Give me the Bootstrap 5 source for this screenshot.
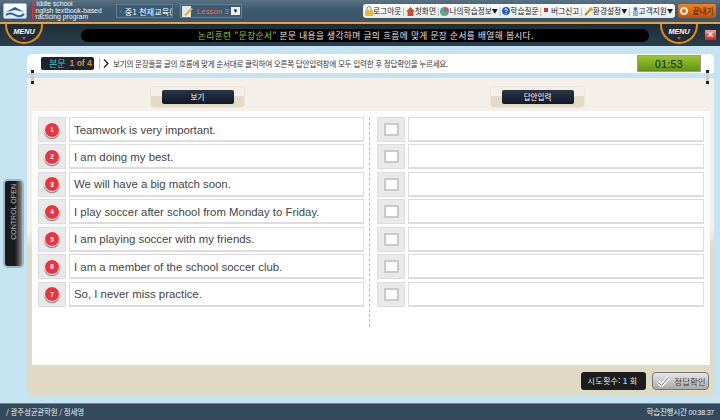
<!DOCTYPE html>
<html lang="ko">
<head>
  <meta charset="UTF-8">
  <meta name="viewport" content="width=device-width, initial-scale=1.0">
  <title>문장순서</title>
  <link href="https://cdn.jsdelivr.net/npm/bootstrap@5.3.3/dist/css/bootstrap.min.css" rel="stylesheet">
  <style>
    html, body { height: 100%; }
    body { width: 720px; height: 420px; overflow: hidden; background: #c5e3f1; font-family: "Noto Sans CJK KR", "Noto Sans", sans-serif; font-size: 9px; line-height: 1; position: relative; }
    .top-bar { height: 22px; background: linear-gradient(#587184, #3f5b70 40%, #3c566b); padding: 0 4px 0 3px; }
    .logo-box { width: 24px; height: 16px; flex-shrink: 0; background: linear-gradient(#fff, #dfe8f2); border: 1px solid #9fb4c6; border-radius: 2px; }
    .logo-text { width: 85px; flex-shrink: 0; margin-left: 4px; color: #f0f4f7; font: 6.8px/6.9px "Liberation Sans", sans-serif; white-space: nowrap; }
    .logo-text b { color: #d8392e; font-weight: 700; }
    .pick-box { height: 14px; flex-shrink: 0; background: #3a5b75; border: 1px solid #64808f; color: #fff; overflow: hidden; white-space: nowrap; }
    .pick-one { width: 57px; padding-left: 3px; font-size: 8.2px; }
    .pick-two { width: 62px; margin-left: 7px; padding-left: 1px; color: #f07040; font: 7.6px "Liberation Sans", sans-serif; letter-spacing: .1px; }
    .drop-mark { width: 9px; height: 8px; background: #eee; color: #111; font-size: 6px; line-height: 8px; text-align: center; margin-left: auto; margin-right: 1px; }
    .tool-menu { width: 312px; height: 14px; flex-shrink: 0; margin-left: auto; background: linear-gradient(#fff, #e9edf0); border-radius: 3px; color: #222; font-size: 7.7px; padding: 0 2px; white-space: nowrap; }
    .tool-menu i { font-style: normal; color: #777; }
    .tool-menu small { font-size: 6px; color: #111; }
    .exit-btn { width: 38px; height: 14px; flex-shrink: 0; margin-left: 3px; background: linear-gradient(#f08120, #c84f08); border-radius: 2px; color: #3a1500; font-size: 7.7px; }
    .orange-line { height: 2px; background: #e9a23f; }
    .sub-bar { height: 22px; background: linear-gradient(#1c2e3a, #2a3f4b); padding: 5px 0 0 81px; }
    .msg-pill { width: 568px; height: 13px; background: #000; border-radius: 7px; color: #e4e4e4; font-size: 8.7px; letter-spacing: .38px; padding-left: 117px; line-height: 13px; white-space: nowrap; }
    .msg-pill em { font-style: normal; color: #9fc52a; }
    .round-menu { position: absolute; top: 24px; width: 38px; height: 20px; border: 2px solid #e08a1a; border-top: 0; border-radius: 0 0 19px 19px; background: #222c33; color: #fff; font: italic 700 7.2px "Liberation Sans", sans-serif; text-align: center; padding-top: 3px; }
    .round-menu::after { content: ""; display: block; width: 0; margin: 1px auto 0; border: 2px solid transparent; border-top: 3px solid #e33; }
    .close-x { position: absolute; left: 705px; top: 30px; width: 11px; height: 10px; background: linear-gradient(#f29a8e, #d3231c); color: #fff; font: 700 10px/10px "Liberation Sans", sans-serif; text-align: center; }
    .work-wrap { margin: 8px 6px 0 27px; }
    .head-strip { height: 20px; background: #fff; border-radius: 5px 5px 3px 3px; border-bottom: 1px solid #ddd; padding-left: 14px; color: #333; font-size: 7.6px; letter-spacing: -.27px; white-space: nowrap; }
    .count-pill { width: 53px; height: 13px; background: #1b2430; border-radius: 2px; color: #4fc4b8; font-size: 9px; letter-spacing: 0; padding-left: 8px; }
    .count-pill span { color: #d9922c; margin-left: 4px; font-family: "Liberation Sans", sans-serif; font-size: 8.5px; font-weight: 700; }
    .head-sep { width: 1px; height: 11px; margin: 0 3px 0 5px; background: #bbb; }
    .time-box { width: 64px; height: 17px; margin: 0 13px 0 auto; background: linear-gradient(#97c72e, #62931a); border: 1px solid #999; color: #10240a; font: 10.5px "Liberation Sans", sans-serif; letter-spacing: .3px; }
    .ring-mark { position: absolute; width: 3px; height: 14px; top: 70px; border-top: 3px solid #222; border-bottom: 3px solid #222; background: #ccc; }
    .main-panel { height: 317px; margin-top: 4px; padding-top: 8px; background: linear-gradient(#f4f0e9 0, #f4f0e9 150px, #e0dac5 170px); }
    .tab-head { width: 95px; height: 22px; padding-top: 3px; border-radius: 4px; background: linear-gradient(#f4f0e9 45%, #e2dcc6 45%); border: 1px solid #ece7da; }
    .tab-left { margin-left: 123px; }
    .tab-right { margin-left: 245px; }
    .tab-label { width: 72px; height: 14px; margin: 0 auto; background: linear-gradient(#2a3448, #11182a); border-radius: 2px; color: #fff; font-size: 7.5px; }
    .white-area { height: 254px; margin: 3px 4px 0 5px; padding: 6px; background: #fff; }
    .sort-col { width: 326px; }
    .answer-col { width: 327px; margin-left: 7px; }
    .split-line { width: 1px; height: 210px; margin-left: 5px; border-left: 1px dashed #bbb; }
    .line-row { height: 25px; margin-bottom: 2.45px; }
    .num-cell { width: 28px; background: #e9e9e9; border: 1px solid #ddd; }
    .txt-cell { flex: 1; margin-left: 3px; border: 1px solid #ddd; border-bottom-width: 2px; background: #fff; color: #444; font: 11.4px "Liberation Sans", sans-serif; padding: 1px 0 0 4px; }
    .num-dot { width: 16px; height: 16px; border-radius: 50%; background: #f0323f; border: 1px solid #fff; box-shadow: 0 1px 1px #777; color: #fff; font: 700 6.5px "Liberation Sans", sans-serif; }
    .check-slot { width: 15px; height: 13px; background: #fff; border: 2px solid #c9c9c9; }
    .action-bar { height: 30px; padding: 7px 5px 0 0; }
    .try-box { width: 65px; height: 18px; background: #1c1c1c; border-radius: 3px; color: #e8e8e8; font-size: 8px; letter-spacing: .3px; padding-right: 2px; }
    .try-box b { color: #6fd6e2; margin: 0 2px; }
    .check-btn { width: 57px; height: 18px; margin-left: 6px; background: linear-gradient(#e6e6e6, #a9a9a9); border: 1px solid #777; border-radius: 4px; color: #444; font-size: 8.5px; padding-left: 1px; }
    .ctrl-tab { position: absolute; left: 3px; top: 179px; width: 21px; height: 89px; border-radius: 5px; background: linear-gradient(90deg, #1a1a1a 60%, #8a8a8a); border: 2px solid #9db7c4; color: #bbb; font: 7px "Liberation Sans", sans-serif; }
    .ctrl-tab span { writing-mode: vertical-rl; transform: rotate(180deg); margin-top: -24px; white-space: nowrap; }
    .foot-bar { position: absolute; left: 0; right: 0; bottom: 0; height: 17px; padding: 0 6px; background: #34495c; border-top: 1px solid #6a8ba0; color: #e8edf1; font-size: 7.5px; letter-spacing: -.22px; }
    .foot-clock { font-family: "Liberation Sans", sans-serif; font-size: 7px; }
  </style>
</head>
<body>

  <div class="top-bar d-flex align-items-center">
    <div class="logo-box d-flex align-items-center justify-content-center">
      <svg width="20" height="13" viewBox="0 0 20 13"><path d="M1 7 10 2l9 5-9-2z" fill="#1d5fae"/><path d="M1 10q4-3 9 0t9-1" fill="none" stroke="#1d5fae" stroke-width="2"/></svg>
    </div>
    <div class="logo-text"><b>M</b>iddle school<br><b>E</b>nglish textbook-based<br><b>P</b>racticing program</div>
    <div class="pick-box pick-one d-flex align-items-center gap-1">
      <svg width="7" height="11" viewBox="0 0 7 11"><rect width="7" height="11" rx="1" fill="#6fa4d6"/><path d="M1 3h5M1 5h5M1 7h5" stroke="#dff"/></svg>
      <span>중1 천재교육(</span>
    </div>
    <div class="pick-box pick-two d-flex align-items-center">
      <svg width="11" height="11" viewBox="0 0 11 11"><rect width="9" height="11" fill="#dfe8f2"/><path d="M2 9 9 2l2 1-7 7z" fill="#e8b020"/></svg>
      <span class="ms-1">Lesson 3</span>
      <span class="drop-mark">▼</span>
    </div>
    <div class="tool-menu d-flex align-items-center justify-content-between">
      <span class="d-flex align-items-center"><svg width="8" height="10" viewBox="0 0 8 10"><path d="M2 4V2.500a2 2 0 0 1 4 0V4" fill="none" stroke="#888"/><rect y="4" width="8" height="6" rx="1" fill="#e9b93a"/></svg>로그아웃</span><i>|</i>
      <span class="d-flex align-items-center"><svg width="9" height="9" viewBox="0 0 9 9"><path d="M4.500 0 9 4.500H7.500V9h-6V4.500H0z" fill="#c8502c"/></svg>첫화면</span><i>|</i>
      <span class="d-flex align-items-center"><svg width="9" height="9" viewBox="0 0 9 9"><circle cx="4.500" cy="4.500" r="4.500" fill="#4f9bd6"/><path d="M4.500 4.500V0A4.500 4.500 0 0 1 9 4.500z" fill="#e0503a"/><path d="M4.500 4.500H0A4.500 4.500 0 0 0 4.500 9z" fill="#6cb83c"/></svg>나의학습정보<small>▼</small></span><i>|</i>
      <span class="d-flex align-items-center"><svg width="8" height="8" viewBox="0 0 8 8"><circle cx="4" cy="4" r="4" fill="#1f5fb8"/><path d="M2.800 3a1.200 1.200 0 1 1 1.800 1L4 4.600V5M4 6v.8" stroke="#fff" fill="none"/></svg>학습질문</span><i>|</i>
      <span class="d-flex align-items-center"><svg width="8" height="5" viewBox="0 0 8 5"><rect x="1" width="4" height="4" fill="#e0263c"/></svg>버그신고</span><i>|</i>
      <span class="d-flex align-items-center"><svg width="9" height="9" viewBox="0 0 9 9"><path d="M1 8 6 3" stroke="#b98a20" stroke-width="2"/><circle cx="6.800" cy="2.200" r="2" fill="#d9a92c"/></svg>환경설정<small>▼</small></span><i>|</i>
      <span class="d-flex align-items-center"><svg width="7" height="9" viewBox="0 0 7 9"><circle cx="3.500" cy="2" r="2" fill="#3f80c0"/><rect x="1" y="4" width="5" height="5" fill="#8fb7dd"/></svg>고객지원<small>▼</small></span>
    </div>
    <div class="exit-btn d-flex align-items-center justify-content-center gap-1">
      <svg width="8" height="8" viewBox="0 0 8 8"><circle cx="4" cy="4" r="3" fill="none" stroke="#e8e8e8" stroke-width="2"/></svg>끝내기
    </div>
  </div>
  <div class="orange-line"></div>
  <div class="sub-bar">
    <div class="msg-pill"><em>논리훈련 "문장순서"</em> 본문 내용을 생각하며 글의 흐름에 맞게 문장 순서를 배열해 봅시다.</div>
  </div>
  <div class="round-menu" style="left:5px">MENU</div>
  <div class="round-menu" style="left:660px">MENU</div>
  <div class="close-x">×</div>

  <div class="work-wrap">
    <div class="head-strip d-flex align-items-center">
      <div class="count-pill d-flex align-items-center">본문<span>1 of 4</span></div>
      <div class="head-sep"></div>
      <svg class="me-1" width="6" height="9" viewBox="0 0 6 9"><path d="M1 .5 5 4.500 1 8.500" fill="none" stroke="#111" stroke-width="1.200"/></svg>
      <span>보기의 문장들을 글의 흐름에 맞게 순서대로 클릭하여 오른쪽 답안입력창에 모두 입력한 후 정답확인을 누르세요.</span>
      <div class="time-box d-flex align-items-center justify-content-center">01:53</div>
    </div>
    <div class="main-panel">
      <div class="d-flex">
        <div class="tab-head tab-left"><div class="tab-label d-flex align-items-center justify-content-center">보기</div></div>
        <div class="tab-head tab-right"><div class="tab-label d-flex align-items-center justify-content-center">답안입력</div></div>
      </div>
      <div class="white-area d-flex">
        <div class="sort-col" id="sort-col"></div>
        <div class="split-line"></div>
        <div class="answer-col" id="answer-col"></div>
      </div>
      <div class="action-bar d-flex justify-content-end">
        <div class="try-box d-flex align-items-center justify-content-center">시도횟수:<b>1</b>회</div>
        <div class="check-btn d-flex align-items-center justify-content-center gap-1">
          <svg width="14" height="11" viewBox="0 0 14 11"><path d="M1.500 5.500l4 4 7-8" fill="none" stroke="#fff" stroke-width="3.500"/><path d="M1.500 5.500l4 4 7-8" fill="none" stroke="#666"/></svg>정답확인
        </div>
      </div>
    </div>
  </div>

  <div class="ring-mark" style="left:31px"></div>
  <div class="ring-mark" style="left:706px"></div>

  <div class="ctrl-tab d-flex align-items-center justify-content-center"><span>CONTROL OPEN</span></div>

  <div class="foot-bar d-flex align-items-center justify-content-between">
    <span>/ 광주성균관학원 / 정세영</span>
    <span>학습진행시간 <span class="foot-clock">00:38:37</span></span>
  </div>

  <script src="https://cdn.jsdelivr.net/npm/bootstrap@5.3.3/dist/js/bootstrap.bundle.min.js"></script>
  <script>
    const frases = [
      'Teamwork is very important.',
      'I am doing my best.',
      'We will have a big match soon.',
      'I play soccer after school from Monday to Friday.',
      'I am playing soccer with my friends.',
      'I am a member of the school soccer club.',
      'So, I never miss practice.'
    ];
    const sortCol = document.getElementById('sort-col');
    const answerCol = document.getElementById('answer-col');
    frases.forEach((t, i) => {
      sortCol.innerHTML += `
        <div class="line-row d-flex">
          <div class="num-cell d-flex align-items-center justify-content-center"><div class="num-dot d-flex align-items-center justify-content-center">${i + 1}</div></div>
          <div class="txt-cell d-flex align-items-center">${t}</div>
        </div>`;
      answerCol.innerHTML += `
        <div class="line-row d-flex">
          <div class="num-cell d-flex align-items-center justify-content-center"><div class="check-slot"></div></div>
          <div class="txt-cell"></div>
        </div>`;
    });
  </script>
</body>
</html>
